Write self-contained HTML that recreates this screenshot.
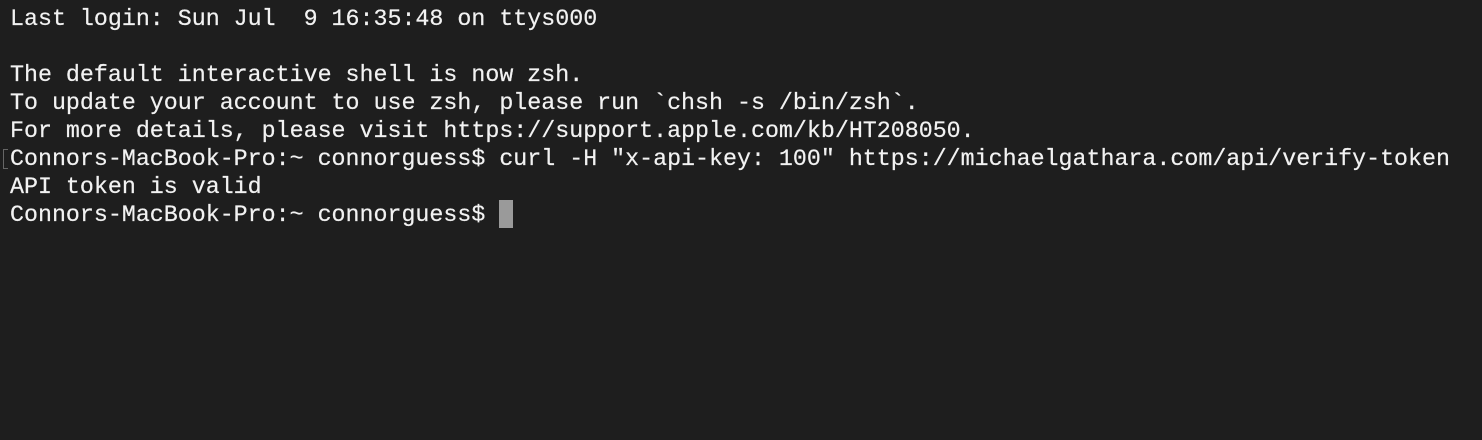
<!DOCTYPE html>
<html><head><meta charset="utf-8"><style>
html,body{margin:0;padding:0;background:#1e1e1e;width:1482px;height:440px;overflow:hidden}
pre{margin:0;padding:5px 0 0 10px;font-family:"Liberation Mono",monospace;font-size:23.3px;line-height:28px;color:#f2f2f2;white-space:pre;-webkit-text-stroke:0.2px #f2f2f2}
.c{display:inline-block;width:14px;height:28px;background:#9a9a9a;vertical-align:top;margin-top:-1px}
.b{position:absolute;left:3px;top:149px;width:4px;height:18px;border:1px solid #666;border-right:none}
</style></head><body>
<div class="b"></div>
<pre>Last login: Sun Jul  9 16:35:48 on ttys000

The default interactive shell is now zsh.
To update your account to use zsh, please run `chsh -s /bin/zsh`.
For more details, please visit https://support.apple.com/kb/HT208050.
Connors-MacBook-Pro:~ connorguess$ curl -H "x-api-key: 100" https://michaelgathara.com/api/verify-token
API token is valid
Connors-MacBook-Pro:~ connorguess$ <span class="c"></span></pre>
</body></html>
